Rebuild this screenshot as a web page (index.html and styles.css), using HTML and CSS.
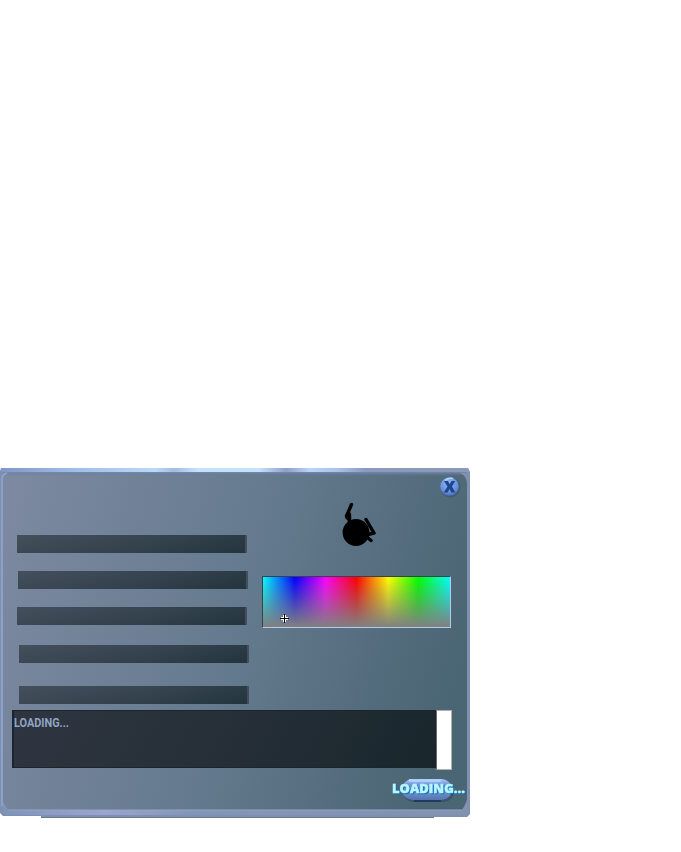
FILE: index.html
```html
<!DOCTYPE html>
<html lang="en">
<head>
<meta charset="utf-8">
<title>Loading</title>
<link rel="stylesheet" href="styles.css">
</head>
<body>
<main class="window">
  <svg class="frame" width="470" height="350" viewBox="0 0 470 350" aria-hidden="true">
    <defs>
      <linearGradient id="face" gradientUnits="userSpaceOnUse" x1="0" y1="70" x2="460" y2="200">
        <stop offset="0" stop-color="#7c89a0"/><stop offset=".5" stop-color="#667b8f"/><stop offset="1" stop-color="#4a6574"/>
      </linearGradient>
      <linearGradient id="top">
        <stop offset="0" stop-color="#7f97c2"/><stop offset=".15" stop-color="#a0bce4"/><stop offset=".33" stop-color="#b9d9f7"/><stop offset=".37" stop-color="#a0bce0"/><stop offset=".42" stop-color="#c4e2ff"/><stop offset=".55" stop-color="#c4e2ff"/><stop offset=".61" stop-color="#909fc7"/><stop offset=".66" stop-color="#b9d5f7"/><stop offset=".72" stop-color="#a9c1e8"/><stop offset=".78" stop-color="#8a99bd"/><stop offset="1" stop-color="#8b9aba"/>
      </linearGradient>
      <linearGradient id="shade" x2="0" y2="1">
        <stop offset="0" stop-color="#7288ae"/><stop offset="1" stop-color="#667a92" stop-opacity="0"/>
      </linearGradient>
      <linearGradient id="bottom">
        <stop offset="0" stop-color="#7f93b9"/><stop offset=".22" stop-color="#9ba5cf"/><stop offset=".4" stop-color="#8296b9"/><stop offset="1" stop-color="#8292af"/>
      </linearGradient>
    </defs>
    <path d="M1 0H468L470 4V346L467 349H434V350H41V348H3L0 345V3Z" fill="#7e90b0"/>
    <path d="M3 4H467V345H3Z" fill="url(#face)"/>
    <path d="M1 0H468L469 4H1Z" fill="url(#top)"/>
    <path d="M3 4H465V8H3Z" fill="url(#shade)"/>
    <path d="M2 338V12Q2 6 7 5" fill="none" stroke="#8ca0c8" stroke-width="2"/>
    <path d="M460 5Q467 8 467 16V332L463 341H462V348H466L469 344V4Z" fill="#8191b0"/>
    <path d="M3 334L8 342H462L467 335V343L465 347H5L3 344Z" fill="url(#bottom)"/>
    <path d="M8 342H462" stroke="#94a6c6" stroke-width="1"/>
    <path d="M41 349.500H434" stroke="#6c7797"/>
  </svg>

  <header class="bar">
    <button class="close" aria-label="Close">
      <svg width="22" height="22" viewBox="0 0 22 22">
        <defs><radialGradient id="orb" cx=".45" cy=".3" r=".7"><stop offset="0" stop-color="#91b3f2"/><stop offset=".65" stop-color="#6c94df"/><stop offset="1" stop-color="#4a72bf"/></radialGradient></defs>
        <circle cx="11.500" cy="11.500" r="10" fill="#3c5368" opacity=".6"/>
        <circle cx="10.500" cy="10.500" r="9.300" fill="url(#orb)"/>
        <path d="M6 4.500Q9 1.500 14 2.500" fill="none" stroke="#b4d5ff" stroke-width="1.500"/>
        <path d="M5 5H9L10.700 8.200 12.500 5H16.200L13 10.500 16.200 16.500H12.400L10.500 13 8.500 16.500H4.800L8.500 10.500Z" fill="#1c478f"/>
      </svg>
    </button>
  </header>

  <section class="content">
    <div class="fields">
      <div class="field f1"></div>
      <div class="field f2"></div>
      <div class="field f3"></div>
      <div class="field f4"></div>
      <div class="field f5"></div>
    </div>
    <div class="side">
      <svg class="figure" width="40" height="48" viewBox="0 0 40 48" aria-hidden="true">
        <circle cx="16" cy="32.500" r="13.400"/>
        <path d="M11.500 4.500L6.500 16L10 21M9.500 14V22M26 19.500L34 33L26 35M28 38L31 40.500" fill="none" stroke="#000" stroke-width="3.400" stroke-linecap="round" stroke-linejoin="round"/>
        <path d="M5 15L11 14V23L5 18Z"/>
      </svg>
      <div class="spectrum">
        <svg class="cursor" width="9" height="9" viewBox="0 0 9 9" shape-rendering="crispEdges">
          <path d="M3 1H6V3H8V6H6V8H3V6H1V3H3Z" fill="#fff"/>
          <path d="M4 0H5V9H4ZM0 4H9V5H0Z"/>
        </svg>
      </div>
    </div>
  </section>

  <section class="log">
    <div class="message">
      <svg width="90" height="20"><text class="log-text" x="0" y="12" textLength="55" lengthAdjust="spacingAndGlyphs">LOADING...</text></svg>
    </div>
    <div class="scroll"></div>
  </section>

  <footer class="actions">
    <button class="load" aria-label="Loading">
      <svg width="80" height="28" viewBox="0 0 80 28">
        <defs>
          <linearGradient id="pill" x2="0" y2="1"><stop offset="0" stop-color="#a9c9f9"/><stop offset=".25" stop-color="#7598dc"/><stop offset=".7" stop-color="#6a8bc9"/><stop offset="1" stop-color="#5474ad"/></linearGradient>
        </defs>
        <rect x="13" y="4" width="51" height="21" rx="10.500" fill="#344b63" opacity=".7"/>
        <rect x="12" y="2" width="50" height="21" rx="10.500" fill="url(#pill)"/>
        <path d="M19 2H51V5H19Z" fill="#add0ff"/>
        <path d="M24 23H51V25H24Z" fill="#223a5c"/>
        <text class="load-text" x="2" y="16" textLength="73" lengthAdjust="spacingAndGlyphs">LOADING...</text>
      </svg>
    </button>
  </footer>
</main>
</body>
</html>
```
FILE: styles.css
```css
body {
  margin: 0;
  padding-top: 468px;
  background: #fff;
  font-family: "Liberation Sans", sans-serif;
}

svg {
  display: block;
}

button {
  padding: 0;
  border: 0;
  background: none;
}

.window {
  position: relative;
  display: flex;
  flex-direction: column;
  width: 470px;
  height: 350px;
}

.frame {
  position: absolute;
  inset: 0;
  z-index: -1;
}

.bar {
  display: flex;
  align-items: flex-start;
  justify-content: flex-end;
  height: 26px;
  padding: 8px 9px 0 0;
}

.content {
  display: flex;
  justify-content: space-between;
  height: 208px;
  padding: 0 19px 0 17px;
}

.fields {
  padding-top: 33px;
}

.field {
  box-sizing: border-box;
  width: 230px;
  height: 18px;
  border-right: 2px solid #464d5e;
  background: linear-gradient(175deg, rgb(70 82 96 / 40%), rgb(25 40 48 / 35%)), linear-gradient(100deg, #444d5b, #374652 55%, #293b44);
}

.f2 {
  margin: 18px 0 0 1px;
}

.f3 {
  margin-top: 18px;
}

.f4 {
  margin: 20px 0 0 2px;
}

.f5 {
  margin: 23px 0 0 2px;
}

.side {
  width: 189px;
  margin-top: -2px;
}

.figure {
  margin: 0 0 28px 78px;
}

.spectrum {
  box-sizing: border-box;
  height: 52px;
  padding: 37px 0 0 17px;
  border: 1px solid;
  border-color: #38404d #b7cbe8 #b7cbe8 #38404d;
  background: linear-gradient(rgb(128 128 128 / 0%), #808080) padding-box, linear-gradient(90deg, #0ff, #00f 17%, #f0f 33.500%, #f00 50%, #ff0 67%, #0f0 83%, #0ff) padding-box;
}

.log {
  display: flex;
  height: 60px;
  padding-left: 12px;
}

.message {
  box-sizing: border-box;
  width: 424px;
  height: 58px;
  padding: 4px 0 0;
  border: solid #1c252d;
  border-width: 1px 1px 1px 2px;
  background: linear-gradient(120deg, #2e3540, #262f38 50%, #19262c);
}

.scroll {
  box-sizing: border-box;
  width: 16px;
  height: 60px;
  border: 1px solid #b5afaa;
  border-left-color: #68696b;
  background: #fff;
}

.log-text {
  fill: #91a4c5;
  font: bold 13px Roboto, sans-serif;
}

.actions {
  display: flex;
  justify-content: flex-end;
  padding: 7px 0 0;
}

.load-text {
  fill: #baf5ff;
  stroke: #baf5ff;
  stroke-width: .4;
  font: 800 12.5px "Open Sans", sans-serif;
  filter: drop-shadow(1px 1.5px 0 #0873b5);
}
```
